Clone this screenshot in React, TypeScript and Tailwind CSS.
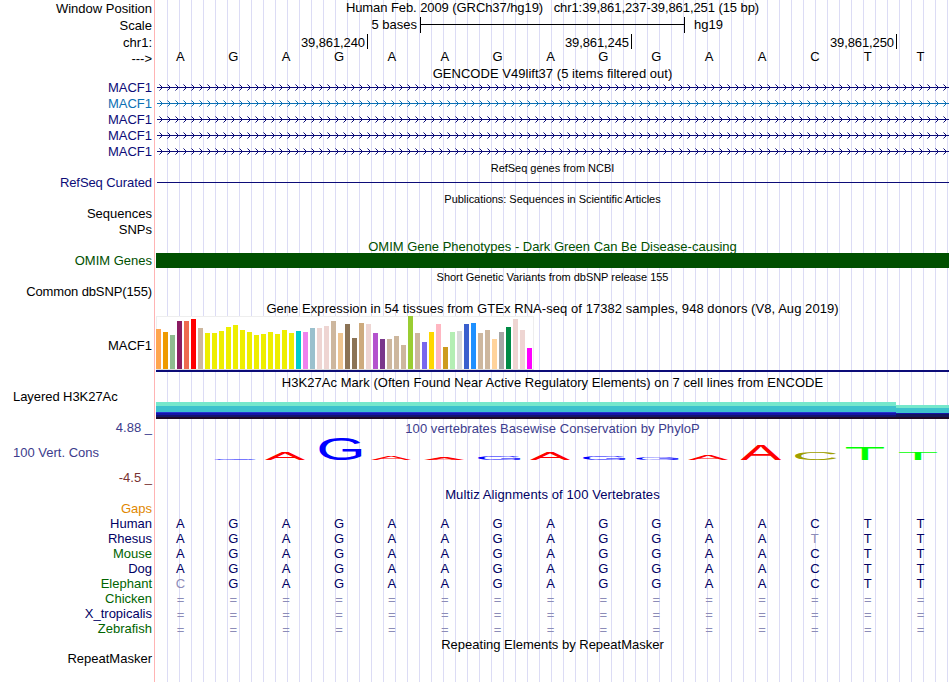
import type { ReactNode } from "react";
import clsx from "clsx";

const SEQUENCE = "AGAGAAGAGGAACTT";

const GTEX_BARS: [number, string][] = [
    [40, "#ffa54f"], [37, "#ee9a00"], [34, "#8fbc8f"], [48, "#8b1c62"], [48, "#ee6a50"], [50, "#ff0000"],
    [41, "#cdb79e"], [36, "#eeee00"], [36, "#eeee00"], [38, "#eeee00"], [42, "#eeee00"], [44, "#eeee00"],
    [39, "#eeee00"], [37, "#eeee00"], [34, "#eeee00"], [35, "#eeee00"], [37, "#eeee00"], [35, "#eeee00"],
    [39, "#eeee00"], [36, "#eeee00"], [38, "#00cdcd"], [37, "#ee82ee"], [41, "#9ac0cd"], [41, "#eed5d2"],
    [43, "#eed5d2"], [48, "#cdb79e"], [36, "#eec591"], [45, "#8b7355"], [31, "#8b7355"], [46, "#cdaa7d"],
    [45, "#eed5d2"], [36, "#b452cd"], [30, "#7a378b"], [30, "#cdb79e"], [33, "#cdb79e"], [24, "#cdb79e"],
    [53, "#9acd32"], [36, "#cdb79e"], [27, "#7a67ee"], [37, "#ffd700"], [45, "#ffb6c1"], [22, "#cd9b1d"],
    [37, "#b4eeb4"], [38, "#d9d9d9"], [45, "#3a5fcd"], [46, "#1e90ff"], [36, "#cdb79e"], [39, "#cdb79e"],
    [30, "#ffd39b"], [37, "#a6a6a6"], [42, "#008b45"], [50, "#eed5d2"], [39, "#eed5d2"], [21, "#ff00ff"],
];

// letter, left edge, drawn width, drawn height
const LOGO: [string, number, number, number][] = [
    ["G", 58, 42, 0.8],
    ["A", 109, 40, 8],
    ["G", 163.5, 42.5, 22.5],
    ["A", 215, 40, 4],
    ["A", 268, 40, 3],
    ["G", 322, 43, 4],
    ["A", 374, 40, 8],
    ["G", 427, 43, 4],
    ["G", 480, 43, 3],
    ["A", 532, 40, 5],
    ["A", 584.5, 40.5, 15],
    ["C", 639, 41, 8],
    ["T", 690, 38, 12],
    ["T", 743, 38, 8],
];

// ink box of each letter at font-size 100: left bearing, width, height, descent
const INK: Record<string, [number, number, number, number]> = {
    A: [0.2, 66.3, 68.8, 0],
    G: [5, 66.6, 70.8, 1],
    C: [5, 62.5, 70.8, 1],
    T: [2.2, 56.7, 68.8, 0],
};

const LOGO_COLORS: Record<string, string> = { A: "#ff0000", G: "#0000ff", C: "#a0a000", T: "#00ff00" };

const SPECIES = [
    { name: "Human", color: "text-[#000064]", bases: SEQUENCE },
    { name: "Rhesus", color: "text-[#000064]", bases: "AGAGAAGAGGAATTT" },
    { name: "Mouse", color: "text-[#006400]", bases: SEQUENCE },
    { name: "Dog", color: "text-[#000064]", bases: SEQUENCE },
    { name: "Elephant", color: "text-[#006400]", bases: "CGAGAAGAGGAACTT" },
    { name: "Chicken", color: "text-[#006400]", bases: "===============" },
    { name: "X_tropicalis", color: "text-[#000064]", bases: "===============" },
    { name: "Zebrafish", color: "text-[#006400]", bases: "===============" },
];

function Track({ className, labels, children }: { className: string; labels?: ReactNode; children?: ReactNode }) {
    return (
        <section className={clsx("flex shrink-0", className)}>
            <div className="w-[152px] shrink-0 text-right">{labels}</div>
            <div className="ml-1 w-[793px] shrink-0">{children}</div>
        </section>
    );
}

function Label({ className, children }: { className?: string; children: ReactNode }) {
    return <div className={clsx("h-4", className)}>{children}</div>;
}

function Title({ className, small, children }: { className?: string; small?: boolean; children: ReactNode }) {
    return <h2 className={clsx("h-4 text-center", small && "text-[11px] leading-4 tracking-[-0.03px]", className)}>{children}</h2>;
}

function Bases({ bases, className }: { bases: string; className?: string }) {
    return (
        <div className={clsx("-ml-0.5 grid w-[793px] grid-cols-[repeat(15,minmax(0,1fr))] text-center", className)}>
            {bases.split("").map((base, i) => (
                <span key={i} className={clsx(base !== SEQUENCE[i] && "text-[#8c8cb8]", base === "=" && "pt-px")}>
                    {base}
                </span>
            ))}
        </div>
    );
}

function Transcript({ id, color }: { id: string; color: string }) {
    return (
        <svg width="793" height="16" className="block" shapeRendering="crispEdges">
            <defs>
                <pattern id={id} x="3" y="0" width="8" height="16" patternUnits="userSpaceOnUse">
                    <path d="M1 5h1v1h-1zM2 6h1v1h-1zM2 8h1v1h-1zM1 9h1v1h-1z" fill={color} />
                    <path d="M0 4h1v1h-1zM0 10h1v1h-1z" fill={color} opacity="0.55" />
                    <path d="M3 7h1v1h-1z" fill={color} />
                </pattern>
            </defs>
            <rect x="1" y="7" width="792" height="1" fill={color} />
            <rect x="3" y="0" width="790" height="16" fill={`url(#${id})`} />
        </svg>
    );
}

function ConservationLogo() {
    return (
        <svg width="793" height="26" className="block overflow-visible" fontFamily="Liberation Sans, Arial, sans-serif" fontSize="100">
            {LOGO.map(([letter, x, w, h], i) => {
                const [left, inkW, inkH, descent] = INK[letter];
                const sx = w / inkW;
                const sy = h / inkH;
                return (
                    <text
                        key={i}
                        fill={LOGO_COLORS[letter]}
                        transform={`matrix(${sx} 0 0 ${sy} ${x - left * sx} ${23 - descent * sy})`}
                    >
                        {letter}
                    </text>
                );
            })}
        </svg>
    );
}

export default function App() {
    return (
        <main className="flex h-[682px] w-[950px] flex-col overflow-hidden bg-white bg-[linear-gradient(#ffb4b4,#ffb4b4),repeating-linear-gradient(90deg,#dcdcf5_0_1px,transparent_1px_12px)] bg-[length:1px_100%,783px_100%] bg-[position:154px_0,167px_0] bg-no-repeat font-['Liberation_Sans',Arial,sans-serif] text-[13px] leading-4 whitespace-pre text-black">
            <Track
                className="h-[66px]"
                labels={
                    <>
                        <Label className="mt-px">Window Position</Label>
                        <Label className="mt-px">Scale</Label>
                        <Label className="mt-px">chr1:</Label>
                        <Label>---&gt;</Label>
                    </>
                }
            >
                <Title className="tracking-[-0.08px]">Human Feb. 2009 (GRCh37/hg19)   chr1:39,861,237-39,861,251 (15 bp)</Title>
                <div className="mt-px flex h-4">
                    <span className="w-[261px] text-right">5 bases</span>
                    <div className="ml-[3px] flex h-4 w-[265px] items-center border-x border-black">
                        <div className="-mt-px h-px w-full bg-black" />
                    </div>
                    <span className="ml-[9px]">hg19</span>
                </div>
                <div className="mt-px flex h-[15px] items-stretch text-right leading-[18px] tracking-[-0.1px]">
                    <span className="w-[212px] border-r border-black pr-0.5">39,861,240</span>
                    <span className="w-[264px] border-r border-black pr-0.5">39,861,245</span>
                    <span className="w-[265px] border-r border-black pr-0.5">39,861,250</span>
                </div>
                <Bases bases={SEQUENCE} />
            </Track>

            <Track
                className="h-[94px]"
                labels={
                    <div className="pt-3.5 text-[#0c0c78]">
                        <Label>MACF1</Label>
                        <Label className="text-[#0c70b4]">MACF1</Label>
                        <Label>MACF1</Label>
                        <Label>MACF1</Label>
                        <Label>MACF1</Label>
                    </div>
                }
            >
                <Title className="-mb-0.5 tracking-[0.03px]">GENCODE V49lift37 (5 items filtered out)</Title>
                <Transcript id="t1" color="#0c0c78" />
                <Transcript id="t2" color="#0c70b4" />
                <Transcript id="t3" color="#0c0c78" />
                <Transcript id="t4" color="#0c0c78" />
                <Transcript id="t5" color="#0c0c78" />
            </Track>

            <Track
                className="h-[31px]"
                labels={<Label className="mt-[15px] tracking-[-0.08px] text-[#0c0c78]">RefSeq Curated</Label>}
            >
                <Title small>RefSeq genes from NCBI</Title>
                <div className="mt-1.5 ml-px h-px bg-[#0c0c78]" />
            </Track>

            <Track
                className="h-12"
                labels={
                    <>
                        <Label className="mt-[15px]">Sequences</Label>
                        <Label>SNPs</Label>
                    </>
                }
            >
                <Title small>Publications: Sequences in Scientific Articles</Title>
            </Track>

            <Track className="h-[30px]" labels={<Label className="mt-3.5 text-[#005000]">OMIM Genes</Label>}>
                <Title className="-mb-0.5 text-[#005000]">OMIM Gene Phenotypes - Dark Green Can Be Disease-causing</Title>
                <div className="h-[15px] bg-[#005000]" />
            </Track>

            <Track
                className="h-8"
                labels={<Label className="mt-[15px] tracking-[-0.12px]">Common dbSNP(155)</Label>}
            >
                <Title small>Short Genetic Variants from dbSNP release 155</Title>
            </Track>

            <Track className="h-[74px]" labels={<Label className="mt-[37px]">MACF1</Label>}>
                <Title className="-mb-px tracking-[0.055px]">
                    Gene Expression in 54 tissues from GTEx RNA-seq of 17382 samples, 948 donors (V8, Aug 2019)
                </Title>
                <div className="flex h-[54px] w-[378px] items-end gap-0.5 border border-[#eeeeee] border-b-[#dcdcdc] bg-white">
                    {GTEX_BARS.map(([height, color], i) => (
                        <div key={i} className="-ml-px w-[5px] shrink-0 not-first:ml-0" style={{ height, backgroundColor: color }} />
                    ))}
                </div>
                <div className="h-0.5 bg-[#0c0c78]" />
            </Track>

            <Track
                className="h-[46px]"
                labels={<Label className="mt-3.5 pl-[13px] text-left tracking-[-0.06px]">Layered H3K27Ac</Label>}
            >
                <Title className="tracking-[0.045px]">
                    H3K27Ac Mark (Often Found Near Active Regulatory Elements) on 7 cell lines from ENCODE
                </Title>
                <div className="mt-[11px] flex h-[17px] items-end">
                    <div className="flex w-[740px] flex-col">
                        <div className="h-1 bg-[#76e8cc]" />
                        <div className="h-1.5 bg-[#3dc2cd]" />
                        <div className="h-px bg-[#2434d0]" />
                        <div className="h-0.5 bg-[#1414aa]" />
                        <div className="h-0.5 bg-[#14146c]" />
                        <div className="h-0.5 bg-[#1e0a28]" />
                    </div>
                    <div className="flex w-[53px] flex-col">
                        <div className="h-[3px] bg-[#76e8cc]" />
                        <div className="h-[5px] bg-[#3dc2cd]" />
                        <div className="h-px bg-[#1414aa]" />
                        <div className="h-[3px] bg-[#14145a]" />
                        <div className="h-0.5 bg-[#1e0a28]" />
                    </div>
                </div>
            </Track>

            <Track
                className="h-[66px]"
                labels={
                    <>
                        <Label className="-mt-px text-[#3c3c8c]">4.88 _</Label>
                        <Label className="mt-[9px] pl-[13px] text-left text-[#3c3c8c]">100 Vert. Cons</Label>
                        <Label className="mt-[9px] text-[#783232]">-4.5 _</Label>
                    </>
                }
            >
                <Title className="tracking-[0.05px] text-[#3c3c8c]">100 vertebrates Basewise Conservation by PhyloP</Title>
                <ConservationLogo />
            </Track>

            <Track className="h-[29px]" labels={<Label className="mt-3.5 text-[#e18700]">Gaps</Label>}>
                <Title className="tracking-[0.1px] text-[#000064]">Multiz Alignments of 100 Vertebrates</Title>
            </Track>

            {SPECIES.map(({ name, color, bases }) => (
                <Track key={name} className="h-[15px]" labels={<Label className={color}>{name}</Label>}>
                    <Bases bases={bases} className="text-[#000064]" />
                </Track>
            ))}

            <Track className="mt-px h-[46px]" labels={<Label className="mt-3.5">RepeatMasker</Label>}>
                <Title>Repeating Elements by RepeatMasker</Title>
            </Track>
        </main>
    );
}
